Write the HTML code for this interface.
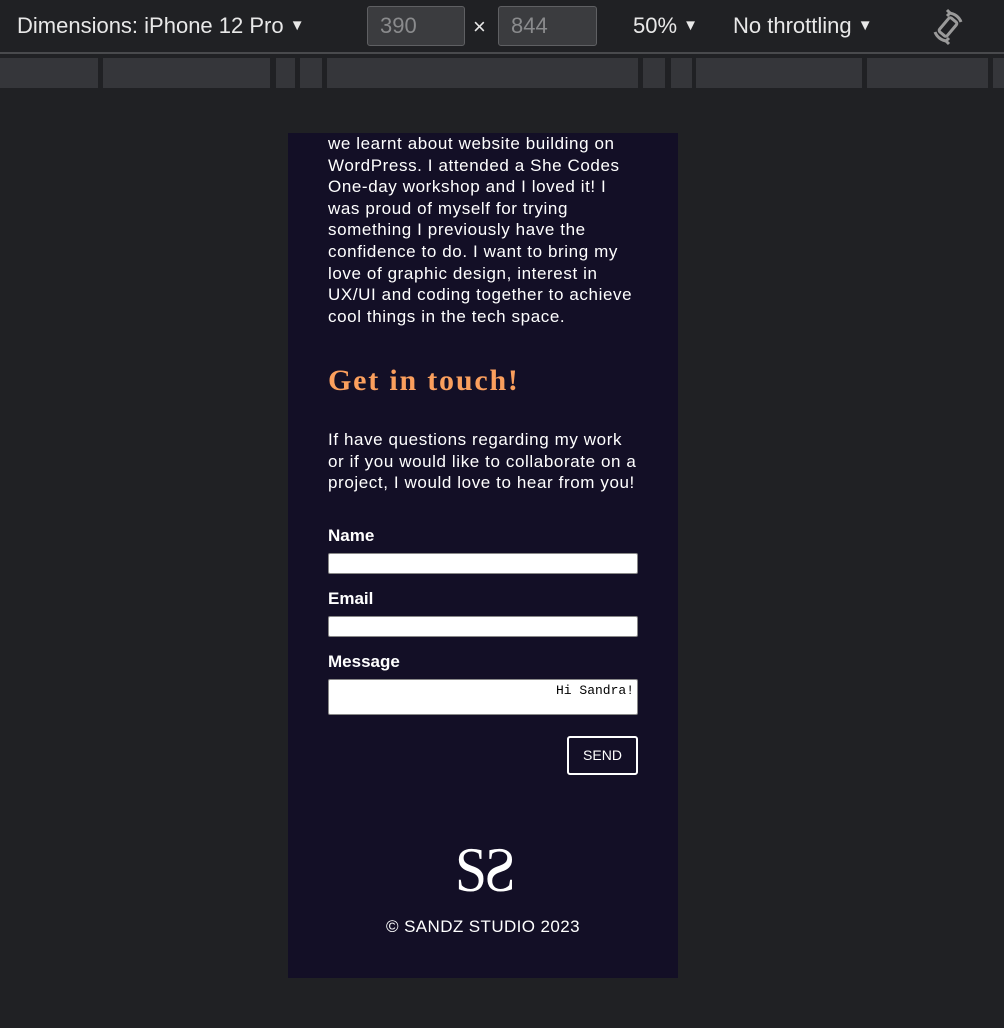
<!DOCTYPE html>
<html><head><meta charset="utf-8"><style>
*{margin:0;padding:0;box-sizing:border-box}
html,body{width:1004px;height:1028px;overflow:hidden;background:#202124;font-family:"Liberation Sans",sans-serif}
.tb{position:absolute;left:0;top:0;width:1004px;height:52px;background:#202124;color:#e8e8e8;font-size:22px}
.tb span{position:absolute;top:13px}
.tb small{font-size:15px;vertical-align:3px}
.box{position:absolute;top:6px;height:40px;border:1px solid #5f6063;background:#3b3c3f;border-radius:3px;color:#8a8b8d;font-size:22px;padding:6px 12px}
.line{position:absolute;left:0;top:52px;width:1004px;height:2px;background:#494a4d}
.seg{position:absolute;top:58px;height:30px;background:#35363a}
.phone{position:absolute;left:288px;top:133px;width:390px;height:845px;background:#130f26;overflow:hidden;color:#fff}
.p{position:absolute;left:40px;width:350px;font-size:17px;line-height:21.5px;white-space:nowrap;letter-spacing:0.6px}
.lbl{position:absolute;left:40px;font-size:17px;font-weight:bold}
.in{position:absolute;left:40px;width:310px;height:21px;background:#fff;border:1px solid #888;border-radius:2px}
</style></head><body>
<div class="tb">
<span style="left:17px">Dimensions: iPhone 12 Pro <small>▼</small></span>
<div class="box" style="left:367px;width:98px">390</div>
<span style="left:473px;top:14px">×</span>
<div class="box" style="left:498px;width:99px">844</div>
<span style="left:633px">50% <small>▼</small></span>
<span style="left:733px">No throttling <small>▼</small></span>
<svg style="position:absolute;left:928px;top:7px" width="40" height="40" viewBox="0 0 40 40" fill="none" stroke="#9a9a9a" stroke-width="3"><rect x="15" y="11" width="10" height="18" rx="2" transform="rotate(40 20 20)"/><path d="M7 25 A14 14 0 0 0 19 34"/><path d="M33 15 A14 14 0 0 0 21 6"/><path d="M19 3 l3 3 -3 3"/><path d="M21 31 l-3 3 3 3"/></svg>
</div>
<div class="line"></div>
<div class="seg" style="left:0;width:98px"></div>
<div class="seg" style="left:103px;width:167px"></div>
<div class="seg" style="left:276px;width:19px"></div>
<div class="seg" style="left:300px;width:22px"></div>
<div class="seg" style="left:327px;width:311px"></div>
<div class="seg" style="left:643px;width:22px"></div>
<div class="seg" style="left:671px;width:21px"></div>
<div class="seg" style="left:696px;width:166px"></div>
<div class="seg" style="left:867px;width:121px"></div>
<div class="seg" style="left:993px;width:11px"></div>
<div class="phone">
<div class="p" style="top:0px;line-height:21.6px">we learnt about website building on<br>WordPress. I attended a She Codes<br>One-day workshop and I loved it! I<br>was proud of myself for trying<br>something I previously have the<br>confidence to do. I want to bring my<br>love of graphic design, interest in<br>UX/UI and coding together to achieve<br>cool things in the tech space.</div>
<div style="position:absolute;left:40px;top:231px;font-family:'Liberation Serif',serif;font-weight:bold;font-size:30px;letter-spacing:1.8px;color:#fb9f5d">Get in touch!</div>
<div class="p" style="top:296px">If have questions regarding my work<br>or if you would like to collaborate on a<br>project, I would love to hear from you!</div>
<div class="lbl" style="top:393px">Name</div>
<div class="in" style="top:420px"></div>
<div class="lbl" style="top:456px">Email</div>
<div class="in" style="top:483px"></div>
<div class="lbl" style="top:519px">Message</div>
<div class="in" style="top:546px;height:36px;font-family:'Liberation Mono',monospace;font-size:13px;color:#000;text-align:right;padding:3px 3px">Hi Sandra!</div>
<div style="position:absolute;left:279px;top:603px;width:71px;height:39px;border:2px solid #fff;border-radius:3px;font-size:14px;text-align:center;line-height:35px">SEND</div>
<div style="position:absolute;left:167px;top:702px;font-family:'Liberation Serif',serif;font-size:64px;line-height:70px;color:#fff;letter-spacing:-2px;font-weight:normal;transform:scaleX(0.9);transform-origin:left">S<span style="display:inline-block;transform:scaleX(-1)">S</span></div>
<div style="position:absolute;left:0;width:390px;top:784px;text-align:center;font-size:17px;letter-spacing:0.4px">© SANDZ STUDIO 2023</div>
</div>
</body></html>
